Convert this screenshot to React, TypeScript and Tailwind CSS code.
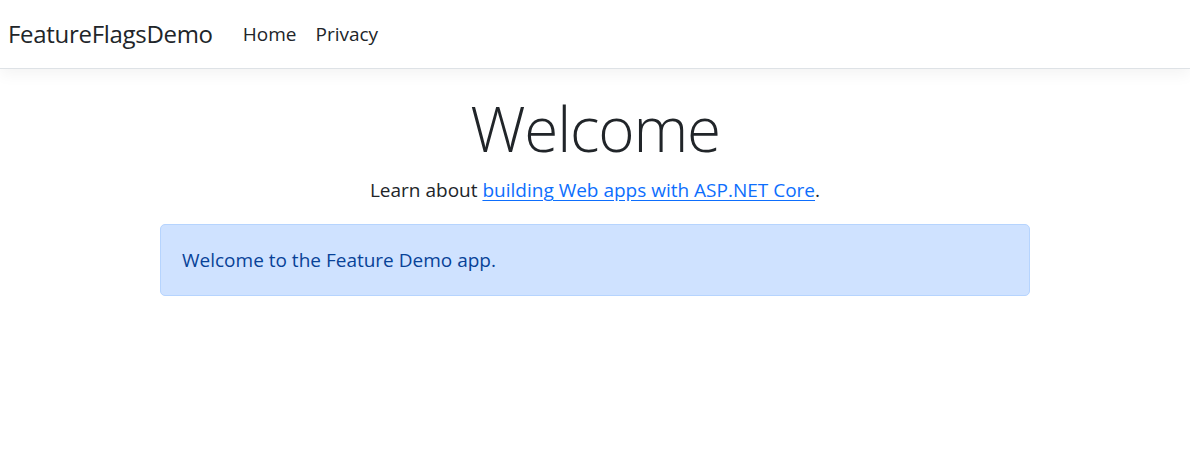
import React from "react";

const font = "font-['Segoe_UI','Open_Sans','Noto_Sans',sans-serif]";

const Navbar: React.FC = () => (
  <nav className="h-[69px] flex items-center bg-white border-b border-[#dee2e6] shadow-[0_5px_15px_rgba(0,0,0,0.05)] px-2">
    <a className="text-[24px] text-[#212529] mr-[30px] tracking-[-0.3px]" href="#">
      FeatureFlagsDemo
    </a>
    <ul className="flex gap-[19px] text-[19px] text-[#212529]">
      <li>
        <a href="#">Home</a>
      </li>
      <li>
        <a href="#">Privacy</a>
      </li>
    </ul>
  </nav>
);

export default function App() {
  return (
    <div className={`min-h-[472px] bg-white text-[#212529] ${font}`}>
      <Navbar />
      <main className="max-w-[900px] mx-auto px-[15px] pt-[22px]">
        <div className="text-center">
          <h1 className="text-[62px] font-light leading-[1.2] tracking-[-1.2px]">Welcome</h1>
          <p className="text-[19px] leading-[30px] mt-[10px]">
            Learn about{" "}
            <a href="#" className="text-[#0d6efd] underline underline-offset-[3px]">
              building Web apps with ASP.NET Core
            </a>
            .
          </p>
        </div>
        <div className="mt-[19px] border border-[#b6d4fe] bg-[#cfe2ff] text-[#084298] rounded-[5px] px-[21px] py-[20px] text-[19px] leading-[30px]">
          Welcome to the Feature Demo app.
        </div>
      </main>
    </div>
  );
}
